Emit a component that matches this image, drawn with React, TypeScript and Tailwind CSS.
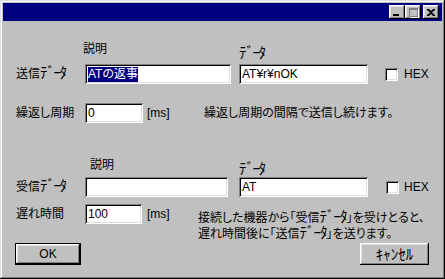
const sunken =
  "bg-white shadow-[inset_1px_1px_0_#808080,inset_-1px_-1px_0_#fff,inset_2px_2px_0_#000,inset_-2px_-2px_0_#dfdfdf]";
const raised =
  "bg-[#c0c0c0] shadow-[inset_-1px_-1px_0_#000,inset_1px_1px_0_#fff,inset_-2px_-2px_0_#808080,inset_2px_2px_0_#dfdfdf]";

// half-width katakana, drawn larger with tight tracking so it matches MS UI Gothic
function Kana({ children, className = "" }: { children: React.ReactNode; className?: string }) {
  return (
    <span className={`inline-block h-[14px] font-['Noto_Sans_CJK_JP',sans-serif] [font-feature-settings:normal] text-[15px] leading-[14px] tracking-[-1.5px] ${className}`}>
      {children}
    </span>
  );
}

function TitleButton({ children, className = "" }: { children: React.ReactNode; className?: string }) {
  return <div className={`w-[16px] h-[14px] flex items-center justify-center ${raised} ${className}`}>{children}</div>;
}

function Field({ width, children }: { width: string; children?: React.ReactNode }) {
  return (
    <div className={`${width} h-[20px] ${sunken} flex items-center pl-[3px] text-[12px] leading-[14px] text-black whitespace-nowrap`}>
      {children}
    </div>
  );
}

function Check() {
  return <div className={`w-[13px] h-[13px] ${sunken}`} />;
}

export default function App() {
  return (
    <div className="w-[445px] h-[279px] bg-[#c0c0c0] p-[3px] flex flex-col text-black font-['Liberation_Sans','Noto_Sans_CJK_JP',sans-serif] [font-feature-settings:'palt'] shadow-[inset_-1px_-1px_0_#000,inset_1px_1px_0_#dfdfdf,inset_-2px_-2px_0_#808080,inset_2px_2px_0_#fff]">
      {/* title bar */}
      <div className="h-[18px] bg-[#000080] flex items-center justify-end pr-[3px]">
        <TitleButton>
          <div className="w-[6px] h-[2px] bg-black mt-[6px] -ml-[2px]" />
        </TitleButton>
        <TitleButton>
          <div className="w-[9px] h-[9px] border border-t-2 border-[#808080] shadow-[1px_1px_0_#fff]" />
        </TitleButton>
        <TitleButton className="ml-[2px]">
          <svg width="8" height="7" viewBox="0 0 8 7">
            <path d="M0 0h2l2 2 2-2h2v1L5 3.5 8 6v1H6L4 5 2 7H0V6l3-2.5L0 1z" fill="#000" />
          </svg>
        </TitleButton>
      </div>

      {/* send labels */}
      <div className="mt-[20px] h-[17px] flex text-[12px] leading-[14px]">
        <span className="ml-[80px] mt-[1px]">説明</span>
        <Kana className="ml-[132px] mt-[4px]">ﾃﾞｰﾀ</Kana>
      </div>

      <div className="mt-[6px] h-[20px] flex items-center text-[12px]">
        <span className="ml-[13px] w-[69px]">
          送信<Kana>ﾃﾞｰﾀ</Kana>
        </span>
        <Field width="w-[146px]">
          <span className="bg-[#000080] text-white leading-[15px]">ATの返事</span>
        </Field>
        <div className="ml-[8px]">
          <Field width="w-[129px]">AT¥r¥nOK</Field>
        </div>
        <div className="ml-[17px]">
          <Check />
        </div>
        <span className="ml-[6px] text-[12px]">HEX</span>
      </div>

      <div className="mt-[19px] h-[20px] flex items-center text-[12px]">
        <span className="ml-[13px] w-[69px]">繰返し周期</span>
        <Field width="w-[58px]">0</Field>
        <span className="ml-[4px] w-[57px] text-[12px]">[ms]</span>
        <span>繰返し周期の間隔で送信し続けます。</span>
      </div>

      {/* receive labels */}
      <div className="mt-[34px] h-[17px] flex text-[12px] leading-[14px]">
        <span className="ml-[87px] mt-[1px]">説明</span>
        <Kana className="ml-[125px] mt-[4px]">ﾃﾞｰﾀ</Kana>
      </div>

      <div className="mt-[3px] h-[20px] flex items-center text-[12px]">
        <span className="ml-[13px] w-[69px]">
          受信<Kana>ﾃﾞｰﾀ</Kana>
        </span>
        <Field width="w-[143px]" />
        <div className="ml-[11px]">
          <Field width="w-[129px]">AT</Field>
        </div>
        <div className="ml-[18px]">
          <Check />
        </div>
        <span className="ml-[5px] text-[12px]">HEX</span>
      </div>

      <div className="mt-[7px] h-[39px] flex items-start text-[12px]">
        <div className="h-[20px] flex items-center">
          <span className="ml-[13px] w-[69px]">遅れ時間</span>
          <Field width="w-[57px]">100</Field>
          <span className="ml-[5px] w-[51px] text-[12px]">[ms]</span>
        </div>
        <div className="mt-[5px] flex flex-col gap-[2px] leading-[14px]">
          <div className="h-[14px]">
            接続した機器から「受信<Kana className="text-[14px] tracking-[-1px]">ﾃﾞｰﾀ</Kana>」を受けとると、
          </div>
          <div className="h-[14px]">
            遅れ時間後に「送信<Kana className="text-[14px] tracking-[-1px]">ﾃﾞｰﾀ</Kana>」を送ります。
          </div>
        </div>
      </div>

      <div className="h-[22px] flex justify-between pl-[12px] pr-[13px]">
        <div className="w-[66px] h-[22px] border border-black">
          <div className={`w-full h-full ${raised} flex items-center justify-center text-[12px]`}>OK</div>
        </div>
        <div className={`w-[69px] h-[22px] ${raised} flex items-center justify-center`}>
          <Kana className="tracking-[0px]">ｷｬﾝｾﾙ</Kana>
        </div>
      </div>
    </div>
  );
}
